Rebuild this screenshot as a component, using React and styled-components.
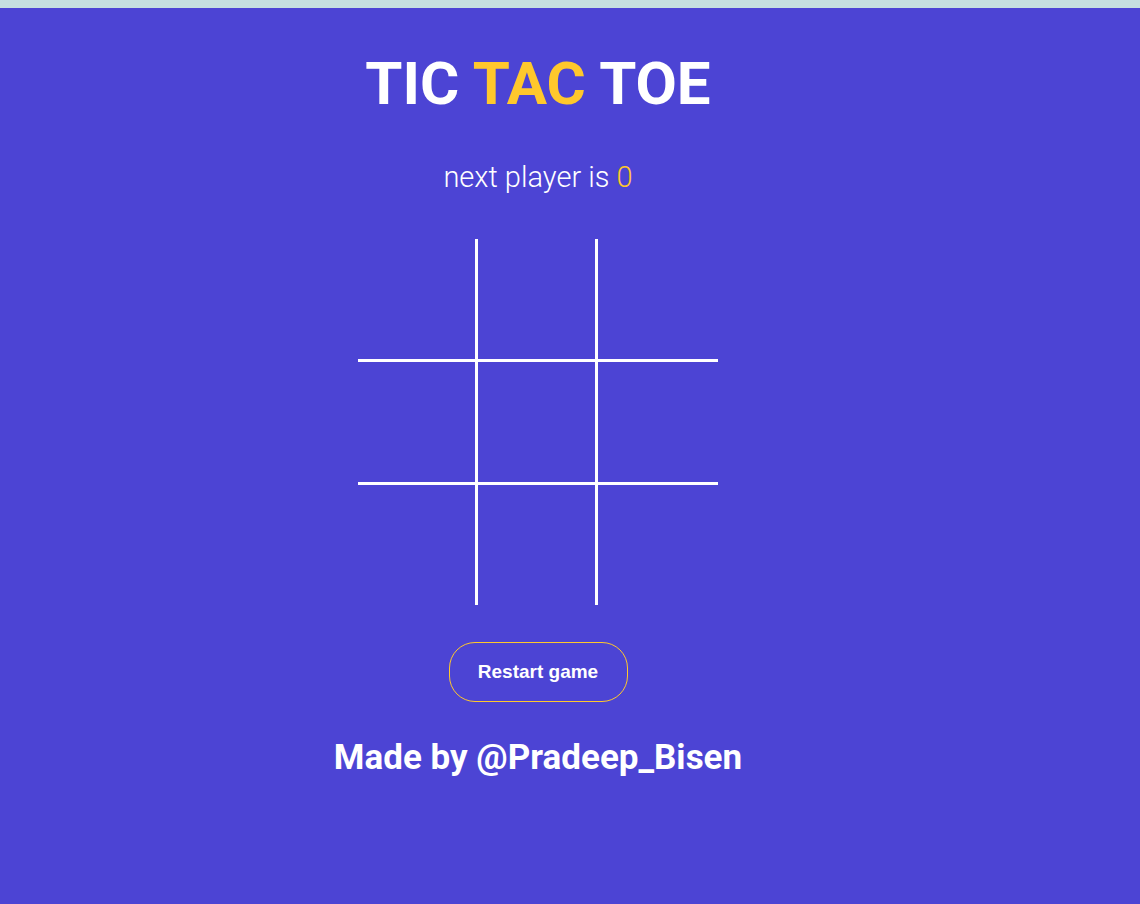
import React, { useState } from "react";
import styled, { createGlobalStyle } from "styled-components";

const Global = createGlobalStyle`
  html, body { margin: 0; padding: 0; }
  body {
    background: #c6dfe0;
    padding-top: 8px;
    font-family: Roboto, "Liberation Sans", sans-serif;
  }
`;

const PageWrap = styled.div`
  background: #4c44d4;
  min-height: 896px;
`;

const Column = styled.div`
  width: 1076px;
  box-sizing: border-box;
  display: flex;
  flex-direction: column;
  align-items: center;
  padding-top: 40px;
`;

const Title = styled.h1`
  margin: 0;
  font-family: Roboto, sans-serif;
  font-weight: 700;
  font-size: 60px;
  line-height: 72px;
  color: #fff;
`;

const Accent = styled.span`
  color: #ffc82c;
`;

const Status = styled.p`
  margin: 40px 0 0;
  font-family: Roboto, sans-serif;
  font-weight: 300;
  font-size: 29px;
  line-height: 34px;
  color: #fff;
`;

const Board = styled.div`
  margin-top: 45px;
  display: grid;
  grid-template-columns: 120px 120px 120px;
  grid-template-rows: 123px 123px 120px;
`;

const Cell = styled.button`
  box-sizing: border-box;
  background: transparent;
  border: none;
  border-right: ${(p) => (p.$right ? "3px solid #fff" : "none")};
  border-bottom: ${(p) => (p.$bottom ? "3px solid #fff" : "none")};
  padding: 0;
  color: #fff;
  font-family: Roboto, sans-serif;
  font-size: 64px;
  cursor: pointer;
`;

const RestartButton = styled.button`
  margin-top: 37px;
  width: 179px;
  height: 60px;
  box-sizing: border-box;
  background: transparent;
  border: 1px solid #ffc82c;
  border-radius: 26px;
  color: #fff;
  font-family: "Liberation Sans", Arial, sans-serif;
  font-weight: 700;
  font-size: 19px;
  cursor: pointer;
`;

const Credit = styled.h2`
  margin: 36px 0 0;
  font-family: Roboto, sans-serif;
  font-weight: 700;
  font-size: 35px;
  line-height: 40px;
  color: #fff;
`;

export default function App() {
  const [cells, setCells] = useState(Array(9).fill(""));
  const [next, setNext] = useState("0");

  const play = (i) => {
    if (cells[i]) return;
    const c = cells.slice();
    c[i] = next;
    setCells(c);
    setNext(next === "0" ? "X" : "0");
  };

  return (
    <PageWrap>
      <Global />
      <Column>
        <Title>
          TIC <Accent>TAC</Accent> TOE
        </Title>
        <Status>
          next player is <Accent>{next}</Accent>
        </Status>
        <Board>
          {cells.map((v, i) => (
            <Cell
              key={i}
              $right={i % 3 !== 2}
              $bottom={i < 6}
              onClick={() => play(i)}
            >
              {v}
            </Cell>
          ))}
        </Board>
        <RestartButton
          onClick={() => {
            setCells(Array(9).fill(""));
            setNext("0");
          }}
        >
          Restart game
        </RestartButton>
        <Credit>Made by @Pradeep_Bisen</Credit>
      </Column>
    </PageWrap>
  );
}
